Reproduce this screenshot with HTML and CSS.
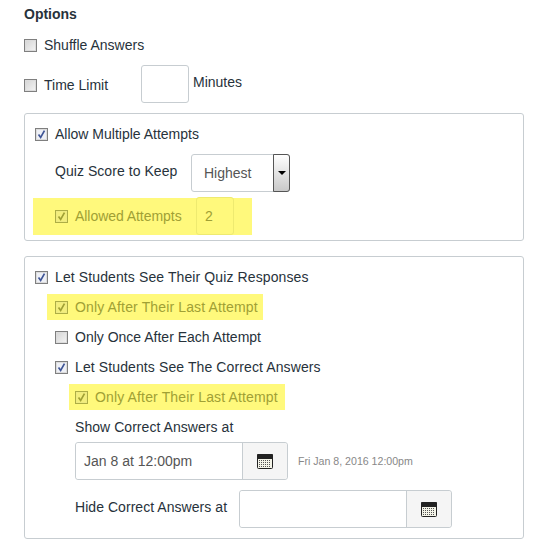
FILE: index.html
```html
<!DOCTYPE html>
<html>
<head>
  <title>Quiz Options</title>
  <link rel="stylesheet" href="styles.css">
</head>
<body>
  <svg class="defs" width="0" height="0">
    <symbol id="tick" viewBox="0 0 13 13">
      <path d="M3 6.5 L5.5 10 L10 2" fill="none" stroke="currentColor" stroke-width="2"/>
    </symbol>
    <pattern id="dots" width="2" height="2" patternUnits="userSpaceOnUse">
      <rect width="1" height="1" fill="#555"/>
    </pattern>
    <symbol id="calendar" viewBox="0 0 16 15">
      <rect x="0.5" y="0.5" width="15" height="14" rx="1" fill="#f4f4e8" stroke="#222"/>
      <rect x="0" y="0" width="16" height="5" rx="1" fill="#222"/>
      <rect x="2" y="6" width="12" height="7" fill="url(#dots)"/>
    </symbol>
  </svg>

  <div class="options">
    <h1 class="title">Options</h1>

    <label class="row shuffle"><span class="check"></span>Shuffle Answers</label>

    <div class="time-limit">
      <span class="check"></span>
      <span class="time-label">Time Limit</span>
      <input class="input minutes-input" type="text">
      <span class="minutes">Minutes</span>
    </div>

    <div class="box attempts">
      <label class="row"><span class="check on"><svg><use href="#tick"/></svg></span>Allow Multiple Attempts</label>
      <div class="score-row">
        <span class="score-label">Quiz Score to Keep</span>
        <div class="select">
          <span class="select-text">Highest</span>
          <span class="select-btn"><i class="arrow"></i></span>
        </div>
      </div>
      <div class="allowed">
        <span class="check on hl"><svg><use href="#tick"/></svg></span>
        <span class="allowed-label">Allowed Attempts</span>
        <input class="input allowed-input" type="text" value="2">
      </div>
    </div>

    <div class="box responses">
      <label class="row wide"><span class="check on"><svg><use href="#tick"/></svg></span>Let Students See Their Quiz Responses</label>
      <div class="mark mark-one"><span class="check on hl"><svg><use href="#tick"/></svg></span>Only After Their Last Attempt</div>
      <label class="row sub once"><span class="check"></span>Only Once After Each Attempt</label>
      <label class="row sub correct wide"><span class="check on"><svg><use href="#tick"/></svg></span>Let Students See The Correct Answers</label>
      <div class="mark mark-two"><span class="check on hl"><svg><use href="#tick"/></svg></span>Only After Their Last Attempt</div>

      <div class="show-label">Show Correct Answers at</div>
      <div class="date-row show-row">
        <div class="date">
          <input class="date-input" type="text" value="Jan 8 at 12:00pm">
          <span class="date-btn"><svg class="cal"><use href="#calendar"/></svg></span>
        </div>
        <span class="date-note">Fri Jan 8, 2016 12:00pm</span>
      </div>
      <div class="date-row hide-row">
        <span class="hide-label">Hide Correct Answers at</span>
        <div class="date">
          <input class="date-input" type="text">
          <span class="date-btn"><svg class="cal"><use href="#calendar"/></svg></span>
        </div>
      </div>
    </div>
  </div>
</body>
</html>
```

FILE: styles.css
```css
body {
  margin: 0;
  background-color: #fff;
  font-family: "Liberation Sans", Arial, sans-serif;
  font-size: 14px;
  line-height: 20px;
  color: #27323b;
}

.defs {
  position: absolute;
}

.options {
  width: 500px;
  padding-left: 24px;
}

.title {
  margin: 0;
  height: 28px;
  font-size: 14px;
  line-height: 28px;
  font-weight: bold;
}

.row {
  display: flex;
  align-items: center;
  height: 20px;
}

.wide {
  letter-spacing: 0.11px;
}

.check {
  flex: none;
  box-sizing: border-box;
  width: 13px;
  height: 13px;
  margin-right: 7px;
  border: 1px solid #7f7f7f;
  box-shadow: inset 0 0 0 1px #dcdcdc;
  background: linear-gradient(135deg, #d4d4d4, #f4f4f4);
  color: #3f5596;
}

.check.on {
  background: #eef0f6;
}

.check svg {
  display: block;
  width: 11px;
  height: 11px;
}

.check.hl {
  border-color: #adad45;
  box-shadow: inset 0 0 0 1px #eeea80;
  background: #f3ee7c;
  color: #a0a035;
}

.shuffle {
  margin-top: 7px;
}

.time-limit {
  display: flex;
  align-items: flex-start;
  height: 38px;
  margin-top: 10px;
}

.time-limit .check {
  margin-top: 14px;
}

.time-label {
  width: 97px;
  margin-top: 10px;
}

.input {
  box-sizing: border-box;
  height: 38px;
  padding: 0 6px;
  border: 1px solid #c7cdd1;
  border-radius: 3px;
  background-color: #fff;
  font: inherit;
}

.minutes-input {
  width: 48px;
}

.minutes {
  margin: 7px 0 0 4px;
}

.box {
  box-sizing: border-box;
  margin-top: 10px;
  padding: 10px 10px 5px;
  border: 1px solid #c7cdd1;
  border-radius: 3px;
}

.score-row {
  display: flex;
  align-items: flex-start;
  height: 38px;
  margin: 10px 0 0 20px;
}

.score-label {
  width: 136px;
  margin-top: 7px;
  letter-spacing: 0.05px;
}

.select {
  display: flex;
  box-sizing: border-box;
  width: 99px;
  height: 38px;
  border: 1px solid #c7cdd1;
  border-radius: 3px;
}

.select-text {
  flex: 1;
  padding-left: 12px;
  line-height: 36px;
  color: #555;
}

.select-btn {
  display: flex;
  align-items: center;
  justify-content: center;
  box-sizing: border-box;
  width: 17px;
  height: 38px;
  margin: -1px -1px 0 0;
  border: 1px solid #555;
  border-radius: 0 3px 3px 0;
  background: linear-gradient(#fff, #c9c9c9);
}

.arrow {
  width: 0;
  height: 0;
  border: 4px solid transparent;
  border-top-color: #000;
  border-bottom-width: 0;
}

.allowed {
  display: flex;
  align-items: center;
  box-sizing: border-box;
  width: 219px;
  height: 37px;
  margin: 6px 0 0 -2px;
  padding-left: 22px;
  background-color: #fff97c;
  color: #a0a035;
}

.allowed-label {
  width: 121px;
  margin-bottom: 1px;
  letter-spacing: -0.05px;
}

.allowed-input {
  width: 38px;
  margin-top: -1px;
  padding: 0 8px;
  border-color: #eeea70;
  background-color: #fff97c;
  color: #a0a035;
}

.mark {
  display: flex;
  align-items: center;
  box-sizing: border-box;
  width: 216px;
  height: 26px;
  margin-top: 7px;
  background-color: #fff97c;
  color: #a0a035;
  letter-spacing: 0.14px;
}

.mark-one {
  margin-left: 12px;
  padding-left: 8px;
}

.mark-two {
  margin-left: 34px;
  padding-left: 6px;
}

.responses {
  margin-top: 15px;
}

.sub {
  margin-left: 20px;
}

.once {
  margin-top: 7px;
}

.correct {
  margin-top: 10px;
}

.show-label {
  margin: 7px 0 0 40px;
  letter-spacing: 0.05px;
}

.date-row {
  display: flex;
  align-items: center;
  margin-left: 40px;
}

.show-row {
  margin-top: 5px;
}

.hide-row {
  margin-top: 10px;
  margin-bottom: 5px;
}

.hide-label {
  width: 164px;
  margin-bottom: 4px;
  letter-spacing: 0.05px;
}

.date {
  display: flex;
  box-sizing: border-box;
  width: 213px;
  height: 38px;
  border: 1px solid #c7cdd1;
  border-radius: 3px;
}

.date-input {
  box-sizing: border-box;
  width: 166px;
  padding: 0 8px;
  border: 0;
  border-radius: 3px 0 0 3px;
  background-color: #fff;
  font: inherit;
  color: #555;
}

.date-btn {
  display: flex;
  align-items: center;
  justify-content: center;
  flex: 1;
  border-left: 1px solid #c7cdd1;
  border-radius: 0 3px 3px 0;
  background-color: #f5f5f5;
}

.cal {
  width: 16px;
  height: 15px;
}

.date-note {
  margin-left: 10px;
  font-size: 10.6px;
  color: #888;
}
```
